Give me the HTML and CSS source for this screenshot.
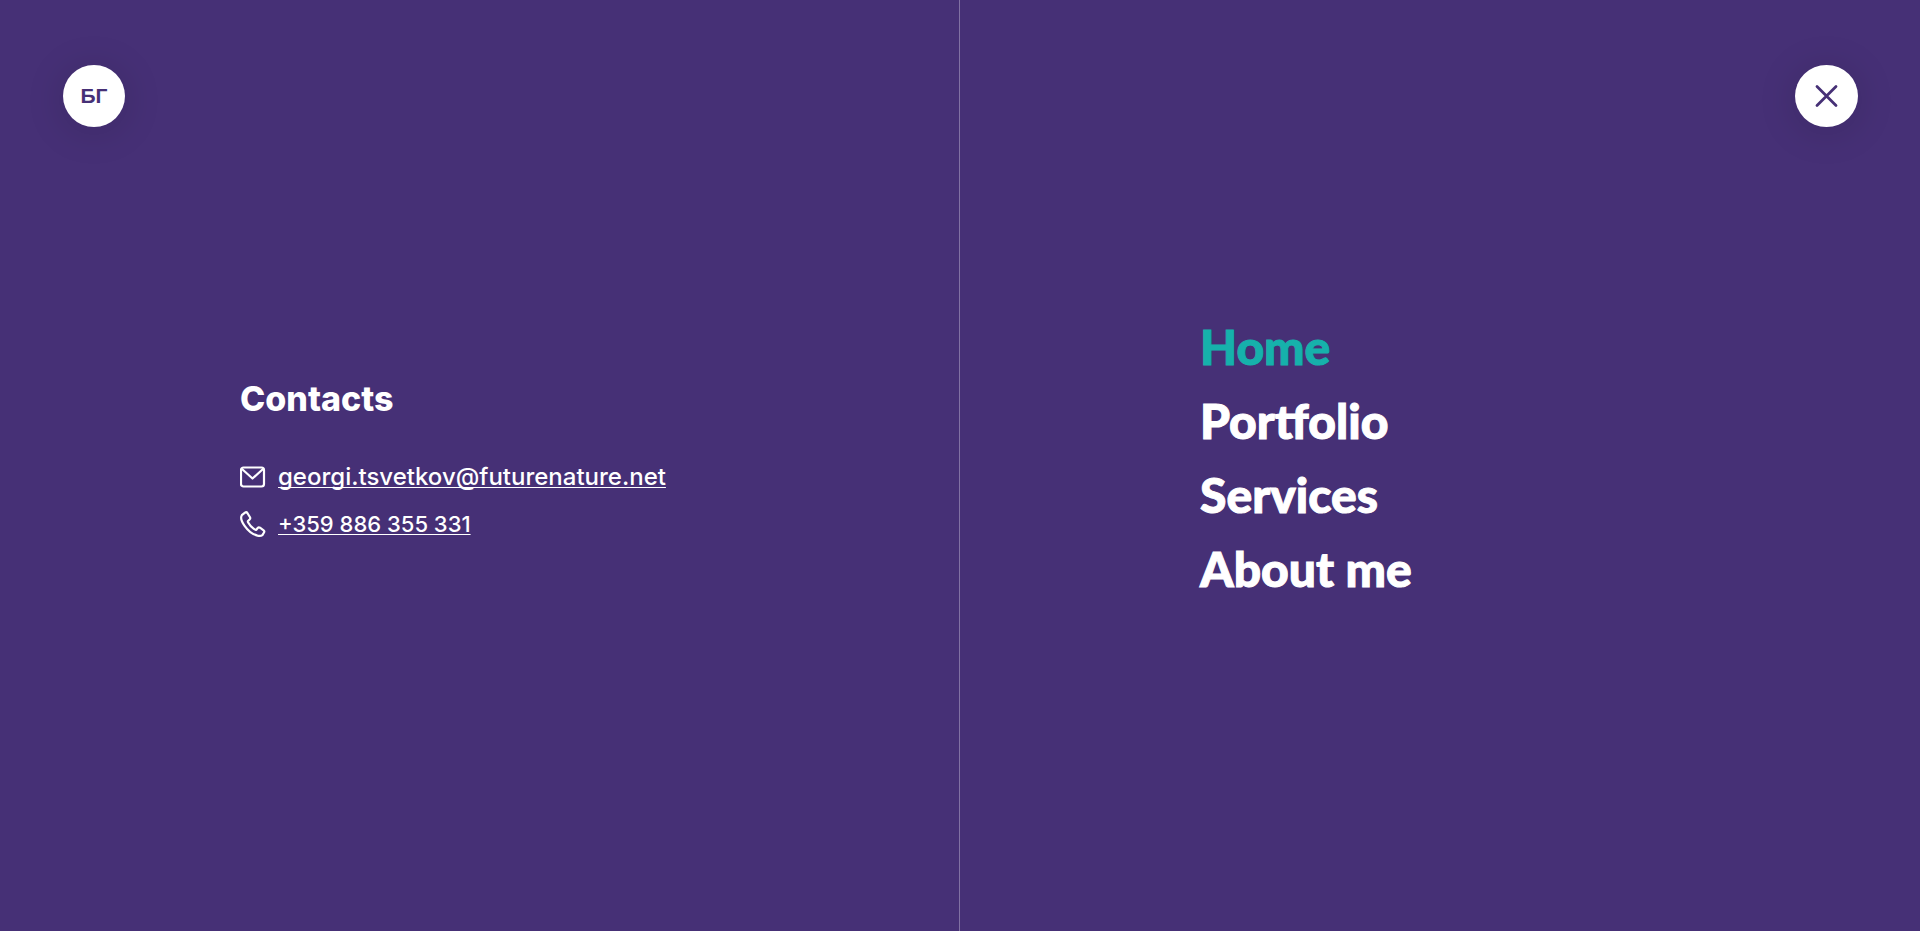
FILE: index.html
```html
<!DOCTYPE html>
<html lang="en">
<head>
<meta charset="utf-8">
<title>Menu</title>
<meta name="viewport" content="width=device-width, initial-scale=1">
<link rel="stylesheet" href="styles.css">
</head>
<body>
<div class="menu">
  <header class="bar">
    <a class="round" href="#bg" lang="bg">БГ</a>
    <button class="round close" type="button" aria-label="Close menu">
      <svg class="cross" viewBox="0 0 24 24" aria-hidden="true"><path d="M2 2.500 21 21.500M21 2.500 2 21.500"/></svg>
    </button>
  </header>
  <section class="panel contacts">
    <h2 class="title">Contacts</h2>
    <ul class="list">
      <li class="row">
        <svg class="icon" viewBox="0 0 26 26" aria-hidden="true"><rect x="1" y="3.500" width="23" height="19" rx="2.500"/><path d="M2 5 12.500 14.500 23 5"/></svg>
        <a class="contact" href="mailto:georgi.tsvetkov@futurenature.net">georgi.tsvetkov@futurenature.net</a>
      </li>
      <li class="row">
        <svg class="icon" viewBox="0 0 26 26" aria-hidden="true"><path d="M5 1.600 1.800 4.200C.6 6.200 1.600 10.600 4.600 14.800 8 19.600 12.600 23.400 17.500 24.600 19.400 25 21.200 25 22.400 24.100L24 21.500C24.500 20.700 24.300 19.900 23.600 19.300L20 16.700C19.200 16.200 18.300 16.300 17.700 17L16.300 18.700C15.600 19.100 14.800 18.600 13.900 17.900 11.400 16.100 9.400 13.700 8 11.200 7.700 10.600 7.900 10 8.400 9.600L9.600 8.500C10.300 7.900 10.400 7.100 10 6.300L7.500 2.200C6.900 1.300 5.800 1.100 5 1.600Z"/></svg>
        <a class="contact phone" href="tel:+359886355331">+359 886 355 331</a>
      </li>
    </ul>
  </section>
  <nav class="panel links">
    <a class="link current" href="#home" aria-current="page">Home</a>
    <a class="link" href="#portfolio">Portfolio</a>
    <a class="link" href="#services">Services</a>
    <a class="link" href="#about">About me</a>
  </nav>
</div>
</body>
</html>
```
FILE: styles.css
```css
* { box-sizing: border-box; }

body {
  margin: 0;
  background: #463076;
  color: #fff;
  font-family: Inter, "Liberation Sans", sans-serif;
}

.menu {
  position: relative;
  display: grid;
  grid-template-columns: 1fr 1fr;
  min-height: 100vh;
}

.bar {
  position: absolute;
  top: 65px;
  left: 63px;
  right: 62px;
  display: flex;
  justify-content: space-between;
}

.round {
  display: flex;
  align-items: center;
  justify-content: center;
  width: 62px;
  height: 62px;
  padding: 0;
  border: 0;
  border-radius: 50%;
  background: #fff;
  color: #463076;
  box-shadow: 0 4px 40px rgba(0, 0, 0, 0.14);
  font-family: "Liberation Sans", sans-serif;
  font-size: 21px;
  font-weight: 700;
  text-decoration: none;
  cursor: pointer;
}

.close { width: 63px; }

.cross {
  width: 24px;
  height: 24px;
  fill: none;
  stroke: #463076;
  stroke-width: 2.8;
  stroke-linecap: round;
}

.panel {
  display: flex;
  flex-direction: column;
  justify-content: center;
  align-items: flex-start;
  padding-left: 25%;
}

.contacts {
  padding-bottom: 16px;
  border-right: 1px solid #8171a3;
}

.title {
  margin: 0 0 41px;
  font-size: 34px;
  line-height: 44px;
  font-weight: 800;
}

.list {
  display: grid;
  gap: 17px;
  margin: 0;
  padding: 0;
  list-style: none;
}

.row {
  display: flex;
  align-items: center;
  gap: 12px;
}

.icon {
  width: 26px;
  height: 26px;
  fill: none;
  stroke: #fff;
  stroke-width: 2.2;
  stroke-linecap: round;
  stroke-linejoin: round;
}

.contact {
  color: #fff;
  font-size: 24px;
  line-height: 30px;
  font-weight: 500;
  text-decoration: underline 1px;
  text-decoration-skip-ink: none;
  text-underline-offset: 2px;
}

.phone { font-size: 22px; }

.links { gap: 14px; padding-bottom: 16px; }

.link {
  color: #fff;
  font-family: Lato, sans-serif;
  font-size: 48px;
  line-height: 60px;
  font-weight: 900;
  text-decoration: none;
  -webkit-text-stroke: 1px currentColor;
}

.current { color: #16b1ab; }
```
